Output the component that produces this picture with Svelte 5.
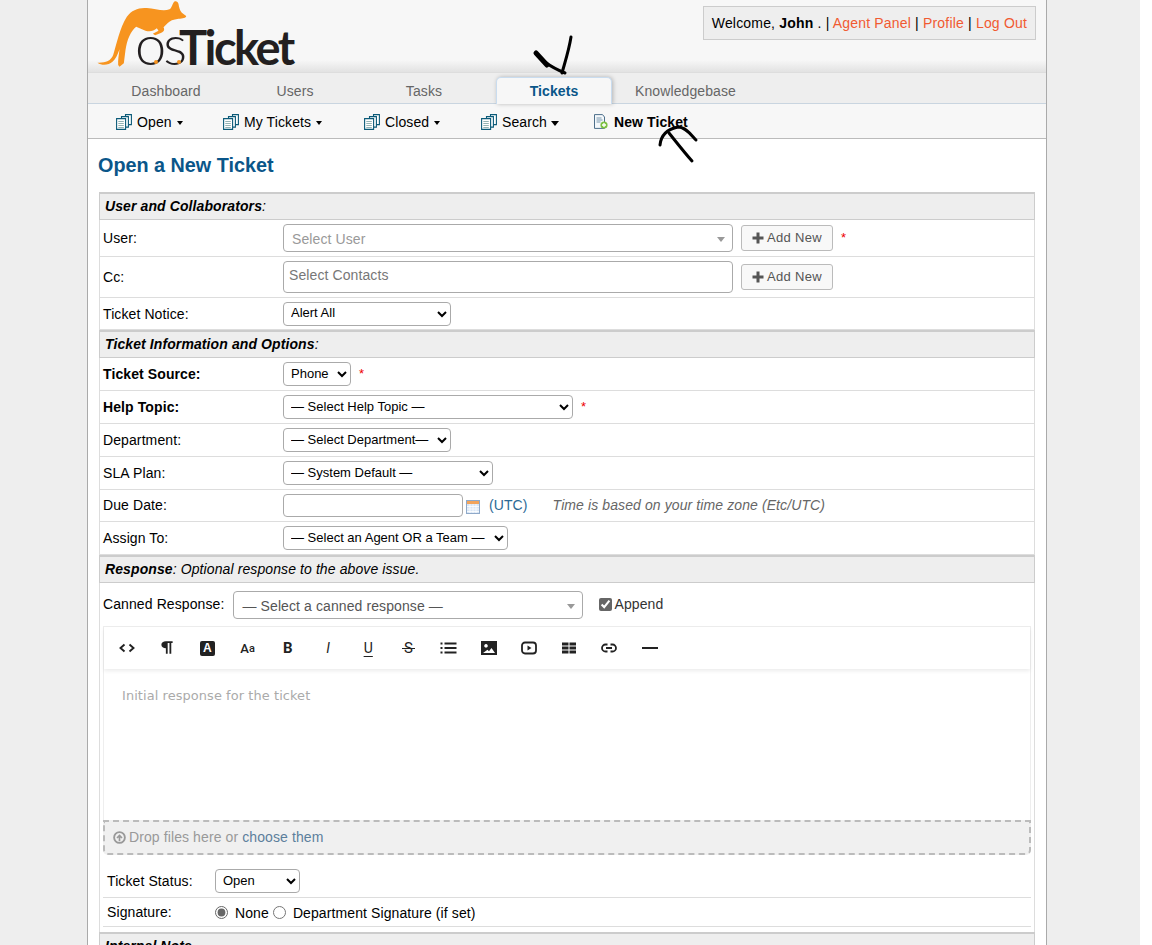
<script lang="ts">
  const tabs = ['Dashboard', 'Users', 'Tasks', 'Tickets', 'Knowledgebase'];
  const subnav = [
    { label: 'Open', cls: 'open' },
    { label: 'My Tickets', cls: 'mine' },
    { label: 'Closed', cls: 'closed' },
    { label: 'Search', cls: 'search' }
  ];
</script>

{#snippet star()}
  <span class="req">*</span>
{/snippet}

{#snippet addNew()}
  <button class="add" type="button">
    <svg viewBox="0 0 12 12" width="12" height="12"><path d="M4.500 .5h3v4H11.500v3H7.500v4h-3v-4H.5v-3h4z" fill="#555" /></svg>
    <span>Add New</span>
  </button>
{/snippet}

<div class="page">
  <div class="container">
    <header class="top">
      <a class="logo" href="#top" aria-label="osTicket">
        <svg class="roo" viewBox="24 0 320 210" width="107" height="70">
          <path fill="#f7941f" d="M52 188C75 189 92 183 99 165C110 130 118 85 140 50C155 30 175 22 200 24C225 26 250 36 268 28C275 24 277 10 282 5C288 2 293 5 295 12C297 22 298 30 305 38L318 48C318 54 308 56 295 56C280 58 268 62 262 70L250 82C255 90 250 97 240 100L225 106L218 101L235 92L230 85C220 94 208 95 196 92L168 80C152 92 140 120 136 150L131 190L118 200L114 195C113 180 116 165 118 148C112 165 106 178 97 185C85 196 65 197 52 188Z" />
        </svg>
        <span class="os">os</span><span class="tk">Ticket</span>
        <i class="dot d1"></i><i class="dot d2"></i>
      </a>
      <div class="info">
        Welcome, <b>John</b> . | <a href="#top">Agent Panel</a> | <a href="#top">Profile</a> | <a href="#top">Log Out</a>
      </div>
    </header>

    <nav class="tabs">
      {#each tabs as tab}
        <a href="#top" class="tab" class:active={tab === 'Tickets'}>{tab}</a>
      {/each}
    </nav>

    <nav class="subnav">
      {#each subnav as item}
        <a href="#top" class="sub {item.cls}">
          <svg viewBox="0 0 16 16" width="16" height="16" fill="#fff" stroke="#0b5a78" stroke-width="1.1">
            <path d="M9.500 .6h5.900v10h-5.900z" />
            <path d="M5.500 2.600h6.900v10.500H5.500z" />
            <path d="M.6 4.600h9v10.800h-9z" />
            <path d="M2.300 7.500h5.500M2.300 9.500h5.500M2.300 11.500h5.500M2.300 13.500h5.500" stroke="#8aa" stroke-width=".9" />
          </svg>
          {item.label}
          <i class="caret"></i>
        </a>
      {/each}
      <a href="#top" class="sub new">
        <svg viewBox="0 0 15 15" width="15" height="15">
          <path d="M1.500 .6h8l2 2.400v11.400h-10z" fill="#f4f8fb" stroke="#4d6f8a" stroke-width="1" />
          <path d="M3.500 4h5M3.500 6h6M3.500 8h4" stroke="#7a98ae" stroke-width="1" />
          <circle cx="11" cy="11" r="3.600" fill="#7cc142" />
          <path d="M9 11h4M11 9v4" stroke="#fff" stroke-width="1.300" />
        </svg>
        New Ticket
      </a>
    </nav>

    <main class="content">
      <h2>Open a New Ticket</h2>

      <div class="form">
        <div class="section"><em><b>User and Collaborators</b>:</em></div>
        <div class="row h37">
          <span class="label">User:</span>
          <div class="fake s450 h28"><span>Select User</span><i class="tri"></i></div>
          {@render addNew()}
          {@render star()}
        </div>
        <div class="row h41">
          <span class="label">Cc:</span>
          <div class="cc">Select Contacts</div>
          {@render addNew()}
        </div>
        <div class="row h32">
          <span class="label">Ticket Notice:</span>
          <select class="w168"><option>Alert All</option></select>
        </div>

        <div class="section"><em><b>Ticket Information and Options</b>:</em></div>
        <div class="row">
          <b class="label">Ticket Source:</b>
          <select class="w68"><option>Phone</option></select>
          {@render star()}
        </div>
        <div class="row">
          <b class="label">Help Topic:</b>
          <select class="w290"><option>— Select Help Topic —</option></select>
          {@render star()}
        </div>
        <div class="row">
          <span class="label">Department:</span>
          <select class="w168"><option>— Select Department—</option></select>
        </div>
        <div class="row">
          <span class="label">SLA Plan:</span>
          <select class="w210"><option>— System Default —</option></select>
        </div>
        <div class="row h32 due">
          <span class="label">Due Date:</span>
          <input class="date" type="text" />
          <svg class="cal" viewBox="0 0 14 14" width="14" height="14">
            <rect x=".5" y=".5" width="13" height="13" fill="#d7e5f5" stroke="#8fa9c9" />
            <rect x="1" y="1" width="12" height="3" fill="#f2a45c" />
            <path d="M1 6.500h12M1 9h12M1 11.500h12M4 4v9M7 4v9M10 4v9" stroke="#fff" stroke-width=".8" />
          </svg>
          <span class="utc">(UTC)</span>
          <em class="tz">Time is based on your time zone (Etc/UTC)</em>
        </div>
        <div class="row">
          <span class="label">Assign To:</span>
          <select class="w225"><option>— Select an Agent OR a Team —</option></select>
        </div>

        <div class="section"><em><b>Response</b>: Optional response to the above issue.</em></div>
        <div class="canned">
          <span class="up">Canned Response:</span>
          <div class="fake s350 h28"><span class="dark">— Select a canned response —</span><i class="tri"></i></div>
          <label class="append up"><input type="checkbox" checked />Append</label>
        </div>

        <div class="response">
          <div class="editor">
            <div class="toolbar">
              <span class="tool">
                <svg viewBox="0 0 16 16" width="16" height="16" fill="none" stroke="#222" stroke-width="1.900"><path d="M5.500 4.500 1.500 8l4 3.500M10.500 4.500l4 3.500-4 3.500" /></svg>
              </span>
              <span class="tool"><svg viewBox="0 0 16 16" width="18" height="18"><path d="M7 13V8.200C4.700 8.200 3 6.800 3 5s1.700-3 4-3h6v1.500h-1.200V13h-1.600V3.500H8.600V13z" fill="#222" /></svg></span>
              <span class="tool"><span class="boxa">A</span></span>
              <span class="tool glyph aa">A<small>a</small></span>
              <span class="tool glyph bold">B</span>
              <span class="tool glyph ital">I</span>
              <span class="tool glyph und">U</span>
              <span class="tool glyph"><span class="strike">S</span></span>
              <span class="tool">
                <svg viewBox="0 0 16 16" width="17" height="16" fill="none" stroke="#222" stroke-width="1.800"><path d="M0 3.500h2M4 3.500h12M0 8h2M4 8h12M0 12.500h2M4 12.500h12" /></svg>
              </span>
              <span class="tool">
                <svg viewBox="0 0 16 16" width="16" height="16"><path fill="#222" fill-rule="evenodd" d="M0 1h16v14H0zM5 4a1.800 1.800 0 1 0 .01 0zM2 13h12l-3.500-5-2.500 3.300-1.500-1.500z" /></svg>
              </span>
              <span class="tool">
                <svg viewBox="0 0 16 16" width="16" height="16"><rect x="1" y="2.500" width="14" height="11" rx="3" fill="none" stroke="#222" stroke-width="1.800" /><path d="M6.500 5.500 10.500 8l-4 2.500z" fill="#222" /></svg>
              </span>
              <span class="tool">
                <svg viewBox="0 0 16 16" width="16" height="16"><path fill="#222" d="M1 2.500h6.500v3H1zM8.500 2.500H15v3H8.500zM1 6.500h6.500v3H1zM8.500 6.500H15v3H8.500zM1 10.500h6.500v3H1zM8.500 10.500H15v3H8.500z" /></svg>
              </span>
              <span class="tool">
                <svg viewBox="0 0 16 16" width="16" height="16" fill="none" stroke="#222" stroke-width="1.800"><path d="M6.500 4.500H4.500a3.500 3.500 0 0 0 0 7h2M9.500 4.500h2a3.500 3.500 0 0 1 0 7h-2M5 8h6" /></svg>
              </span>
              <span class="tool">
                <svg viewBox="0 0 16 16" width="16" height="16"><path d="M0 7h16v2H0z" fill="#222" /></svg>
              </span>
            </div>
            <div class="body">Initial response for the ticket</div>
          </div>
          <div class="drop">
            <svg viewBox="0 0 14 14" width="13" height="13" fill="none" stroke="#999" stroke-width="2"><circle cx="7" cy="7" r="5.800" /><path d="M7 11V5M4.300 7.500 7 4.700l2.700 2.800" stroke-width="1.800" /></svg>
            <span>Drop files here or <a href="#top">choose them</a></span>
          </div>
          <div class="meta first">
            <span class="mlabel">Ticket Status:</span>
            <select class="w85"><option>Open</option></select>
          </div>
          <div class="meta">
            <span class="mlabel">Signature:</span>
            <label class="radio"><input type="radio" name="sig" checked />None</label>
            <label class="radio"><input type="radio" name="sig" />Department Signature (if set)</label>
          </div>
        </div>

        <div class="section note"><em><b>Internal Note</b></em></div>
      </div>
    </main>
  </div>

  <!-- hand drawn marks on top of the screenshot -->
  <svg class="marks" viewBox="0 0 1152 945" width="1152" height="945" fill="none" stroke="#000" stroke-linecap="round" stroke-linejoin="round">
    <path d="M571 37C569 50 565 62 562 73" stroke-width="3" />
    <path d="M536 53C542 60 548 66 565 73" stroke-width="3" />
    <path d="M536 53 547 65" stroke-width="5" />
    <path d="M660 145C661 135 668 129 678 127C686 127 692 136 696 140" stroke-width="3" />
    <path d="M669 133C677 143 684 152 692 161" stroke-width="3" />
  </svg>
</div>

<style>
  :global(body) {
    margin: 0;
    background: #fff;
  }

  .page {
    position: relative;
    width: 1140px;
    height: 945px;
    overflow: hidden;
    background: #eee;
    font-family: 'Liberation Sans', Arial, sans-serif;
    font-size: 14px;
    letter-spacing: 0.1px;
    color: #000;
  }

  .container {
    width: 958px;
    height: 945px;
    margin-left: 87px;
    background: #fff;
    border-left: 1px solid #aaa;
    border-right: 1px solid #aaa;
  }

  a {
    text-decoration: none;
  }

  .top {
    display: flex;
    justify-content: flex-end;
    align-items: flex-start;
    position: relative;
    height: 73px;
    box-sizing: border-box;
    padding: 6px 10px 0 0;
    background: linear-gradient(to bottom, #f7f7f7 0, #f7f7f7 60px, #e2e2e2 72px);
    border-bottom: 1px solid #ddd;
  }

  .logo {
    position: absolute;
    left: 0;
    top: 0;
    width: 210px;
    height: 70px;
    color: #231f20;
    font-family: Lato, sans-serif;
    letter-spacing: 0;
  }

  .roo {
    position: absolute;
    left: 0;
    top: 0;
  }

  .os {
    position: absolute;
    left: 47px;
    top: 16px;
    font-size: 56px;
    line-height: 56px;
    font-weight: 300;
    letter-spacing: -3px;
  }

  .tk {
    position: absolute;
    left: 91px;
    top: 24px;
    font-size: 47px;
    line-height: 47px;
    font-weight: 700;
    letter-spacing: -2.500px;
  }

  .dot {
    position: absolute;
    top: 60px;
    width: 4px;
    height: 4px;
    border-radius: 50%;
    background: #f7941f;
  }

  .d1 { left: 66px; }
  .d2 { left: 89px; }

  .info {
    height: 34px;
    box-sizing: border-box;
    padding: 0 8px;
    line-height: 32px;
    letter-spacing: 0.18px;
    background: #eee;
    border: 1px solid #ccc;
    white-space: nowrap;
  }

  .info a {
    color: #f15a31;
  }

  .tabs {
    display: flex;
    gap: 13px;
    height: 31px;
    box-sizing: border-box;
    padding: 4px 0 0 20px;
    background: #eee;
    border-bottom: 1px solid #c9d5e0;
  }

  .tab {
    min-width: 116px;
    box-sizing: border-box;
    padding: 0 10px;
    line-height: 28px;
    text-align: center;
    color: #666;
  }

  .active {
    height: 27px;
    margin-left: 1px;
    line-height: 26px;
    font-weight: bold;
    color: #0a5689;
    background: #f7f7f7;
    border: 1px solid #c9dcef;
    border-bottom: none;
    border-radius: 5px 5px 0 0;
    box-shadow: 1px 0 4px rgba(0, 0, 0, 0.25);
  }

  .subnav {
    display: flex;
    align-items: center;
    height: 35px;
    box-sizing: border-box;
    padding: 1px 0 0 28px;
    background: #f7f7f7;
    border-bottom: 1px solid #bbb;
  }

  .sub {
    display: flex;
    align-items: center;
    gap: 5px;
    color: #000;
  }

  .open { width: 107px; }
  .mine { width: 141px; }
  .closed { width: 117px; }
  .search { width: 112px; }

  .caret {
    display: inline-block;
    width: 0;
    height: 0;
    margin-left: 0;
    margin-top: 2px;
    border-left: 3.500px solid transparent;
    border-right: 3.500px solid transparent;
    border-top: 4px solid #000;
  }

  .search .caret {
    margin-left: -1px;
    margin-top: 3px;
    border-left-width: 4.500px;
    border-right-width: 4.500px;
    border-top-width: 5px;
  }

  .new {
    gap: 6px;
    font-weight: bold;
  }

  .content {
    padding: 0 11px 0 10px;
  }

  h2 {
    margin: 0;
    height: 53px;
    box-sizing: border-box;
    padding-top: 14px;
    font-size: 19.800px;
    line-height: 24px;
    letter-spacing: 0;
    color: #0a5689;
  }

  .form {
    border-left: 1px solid #ddd;
    border-right: 1px solid #ddd;
    margin-left: 1px;
  }

  .section {
    height: 28px;
    box-sizing: border-box;
    padding-left: 5px;
    line-height: 25px;
    background: #eee;
    border: 1px solid #ccc;
    border-top-width: 2px;
    margin: 0 -1px;
  }

  .row {
    display: flex;
    align-items: center;
    height: 33px;
    box-sizing: border-box;
    padding-left: 3px;
    border-bottom: 1px solid #ddd;
  }

  .row.h37 { height: 37px; }
  .row.h41 { height: 41px; }
  .row.h32 { height: 32px; }

  .label {
    flex: none;
    width: 180px;
  }

  select {
    height: 24px;
    box-sizing: border-box;
    padding: 0 0 2px 3px;
    font-family: inherit;
    font-size: 13px;
    color: #000;
    background: #fff;
    border: 1px solid #aaa;
    border-radius: 4px;
  }

  .w68 { width: 68px; }
  .w85 { width: 85px; }
  .w168 { width: 168px; }
  .w210 { width: 210px; }
  .w225 { width: 225px; }
  .w290 { width: 290px; }

  .fake {
    display: flex;
    align-items: center;
    justify-content: space-between;
    box-sizing: border-box;
    padding: 2px 7px 0 8px;
    color: #999;
    background: #fff;
    border: 1px solid #aaa;
    border-radius: 4px;
  }

  .fake .dark {
    color: #555;
  }

  .s450 { width: 450px; }
  .s350 { width: 350px; }
  .h28 { height: 28px; }

  .tri {
    width: 0;
    height: 0;
    border-left: 4px solid transparent;
    border-right: 4px solid transparent;
    border-top: 5px solid #999;
  }

  .cc {
    width: 450px;
    height: 32px;
    box-sizing: border-box;
    padding: 5px 5px;
    color: #777;
    background: #fff;
    border: 1px solid #aaa;
    border-radius: 4px;
  }

  .add {
    display: flex;
    align-items: center;
    justify-content: center;
    gap: 3px;
    width: 92px;
    height: 26px;
    margin-left: 8px;
    padding: 0 0 1px;
    font-family: inherit;
    font-size: 13px;
    letter-spacing: 0.3px;
    color: #555;
    background: #f8f8f8;
    border: 1px solid #bbb;
    border-radius: 3px;
  }

  .req {
    margin: -2px 0 0 8px;
    color: #e00;
    font-size: 13px;
  }

  .date {
    width: 180px;
    height: 23px;
    box-sizing: border-box;
    padding: 0;
    background: #fff;
    border: 1px solid #aaa;
    border-radius: 4px;
  }

  .cal {
    margin: 2px 0 0 3px;
  }

  .due .label,
  .utc,
  .tz {
    margin-top: -2px;
  }

  .utc {
    margin-left: 9px;
    color: #2b6a96;
  }

  .tz {
    margin-left: 25px;
    color: #666;
  }

  .canned {
    display: flex;
    align-items: center;
    height: 43px;
    box-sizing: border-box;
    padding: 1px 0 0 3px;
    gap: 8px;
  }

  .up {
    margin-top: -2px;
  }

  .fake.s350 {
    margin-left: 1px;
  }

  .append {
    display: flex;
    align-items: center;
    gap: 2px;
    margin-left: 8px;
    color: #333;
  }

  .append input {
    margin: 0;
    width: 13px;
    height: 13px;
    accent-color: #666;
  }

  .response {
    padding: 0 3px 0 3px;
  }

  .editor {
    border: 1px solid #eee;
    border-bottom: none;
    box-sizing: border-box;
    height: 194px;
  }

  .toolbar {
    display: flex;
    align-items: center;
    height: 42px;
    padding-left: 3px;
    box-shadow: 0 2px 4px rgba(0, 0, 0, 0.08);
  }

  .tool {
    display: flex;
    align-items: center;
    justify-content: center;
    width: 40.200px;
    color: #222;
  }

  .boxa {
    width: 15px;
    height: 15px;
    line-height: 15px;
    text-align: center;
    font-size: 12px;
    font-weight: bold;
    color: #fff;
    background: #222;
    border-radius: 2px;
  }

  .glyph {
    font-family: Roboto, sans-serif;
    font-size: 14px;
    font-weight: 400;
  }

  .aa {
    font-size: 13px;
    font-weight: 500;
  }

  .aa small {
    font-size: 11px;
  }

  .bold { font-weight: 700; font-size: 15px; }
  .ital { font-style: italic; }
  .und { text-decoration: underline; text-underline-offset: 3px; }

  .strike {
    position: relative;
    font-size: 15px;
  }

  .strike::after {
    content: '';
    position: absolute;
    left: -2px;
    right: -2px;
    top: 9px;
    height: 1px;
    background: #222;
  }

  .body {
    padding: 19px 18px 0;
    font-family: 'DejaVu Sans', sans-serif;
    font-size: 12.900px;
    color: #aaa;
  }

  .drop {
    display: flex;
    align-items: center;
    gap: 3px;
    height: 35px;
    box-sizing: border-box;
    padding: 0 0 1px 8px;
    color: #999;
    background: #f0f0f0;
    border: 2px dashed #bbb;
    border-radius: 0 0 5px 5px;
  }

  .drop a {
    color: #5c7f9c;
  }

  .meta {
    display: flex;
    align-items: center;
    height: 29px;
    box-sizing: border-box;
    padding-left: 4px;
    border-bottom: 1px solid #ddd;
  }

  .meta.first {
    height: 43px;
    padding-top: 10px;
  }

  .mlabel {
    width: 108px;
  }

  .radio {
    display: flex;
    align-items: center;
    gap: 7px;
    margin-right: 4px;
    padding-top: 1px;
  }

  .radio input {
    margin: 0;
    width: 13px;
    height: 13px;
    accent-color: #666;
  }

  .note {
    margin-top: 5px;
  }

  .marks {
    position: absolute;
    left: 0;
    top: 0;
    pointer-events: none;
  }
</style>
